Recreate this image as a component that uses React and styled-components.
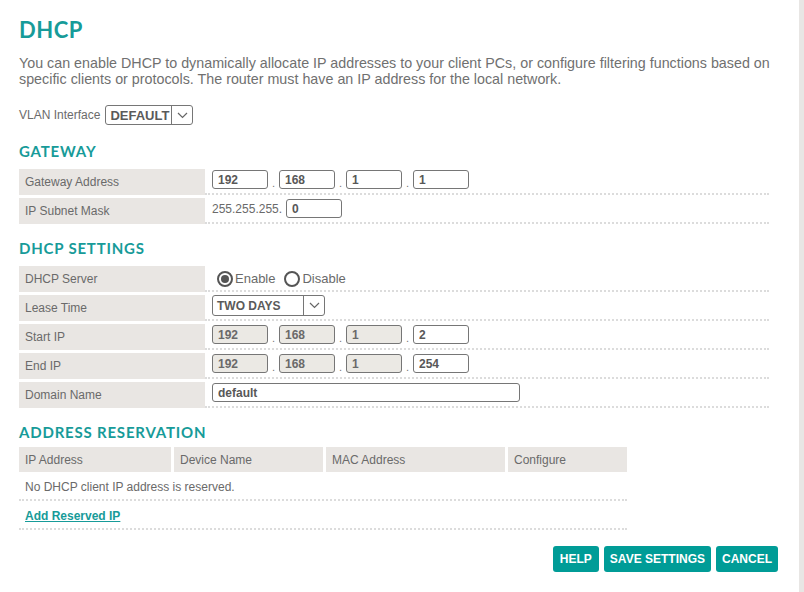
import styled, { createGlobalStyle } from "styled-components";

const GlobalStyle = createGlobalStyle`
	html, body {
		margin: 0;
		padding: 0;
		background: #ffffff;
	}
	body {
		font-family: "Liberation Sans", Arial, sans-serif;
		color: #6b6b6b;
	}
`;

const teal = "#179b99";
const labelBg = "#e9e6e3";

const Page = styled.div`
	box-sizing: border-box;
	width: 804px;
	min-height: 100vh;
	border-right: 5px solid #e8e6e4;
	padding: 17px 0 20px 19px;
`;

const Title = styled.h1`
	margin: 0;
	font-family: Lato, "DejaVu Sans", sans-serif;
	font-weight: 700;
	font-size: 22px;
	line-height: 26px;
	letter-spacing: 0.5px;
	color: ${teal};
`;

const Intro = styled.p`
	margin: 12px 0 0;
	width: 765px;
	font-size: 14.3px;
	line-height: 16px;
	color: #707070;
`;

const VlanRow = styled.div`
	display: flex;
	align-items: center;
	gap: 5px;
	margin-top: 18px;
	font-size: 12px;
`;

const SectionTitle = styled.h2`
	margin: ${(p) => (p.$first ? "17px" : "15px")} 0 ${(p) => p.$after || 9}px;
	font-family: Lato, "DejaVu Sans", sans-serif;
	font-weight: 700;
	font-size: 15px;
	line-height: 18px;
	letter-spacing: 0.8px;
	color: ${teal};
`;

const Table = styled.div`
	display: flex;
	flex-direction: column;
	gap: 3px;
	width: 750px;
`;

const Row = styled.div`
	display: flex;
	height: 26px;
`;

const Label = styled.div`
	box-sizing: border-box;
	width: 186px;
	flex: none;
	background: ${labelBg};
	padding-left: 6px;
	display: flex;
	align-items: center;
	font-size: 12px;
	color: #6a6a6a;
`;

const Value = styled.div`
	box-sizing: border-box;
	flex: 1;
	display: flex;
	align-items: center;
	padding-left: 7px;
	padding-bottom: 3px;
	border-bottom: 2px dotted #dcdcdc;
	font-size: 12px;
	color: #6a6a6a;
`;

const Prefix = styled.span`
	margin-right: 4px;
`;

const Input = styled.input`
	box-sizing: border-box;
	width: ${(p) => p.$w || 56}px;
	height: 19px;
	margin: 0;
	padding: 0 5px;
	border: 1px solid #767676;
	border-radius: 3px;
	background: ${(p) => (p.disabled ? "#ebe9e4" : "#ffffff")};
	font-family: "Liberation Sans", Arial, sans-serif;
	font-weight: 700;
	font-size: 12px;
	color: #585858;
	outline: none;
	&:disabled {
		color: #6a6a6a;
	}
`;

const Dot = styled.span`
	width: 11px;
	text-align: center;
	font-size: 11px;
	color: #777;
	align-self: flex-end;
	padding-bottom: 1px;
`;

const SelectBox = styled.div`
	box-sizing: border-box;
	display: flex;
	width: ${(p) => p.$w}px;
	height: ${(p) => p.$h || 21}px;
	border: 1px solid #767676;
	border-radius: 3px;
	background: #fff;
`;

const SelectText = styled.span`
	flex: 1;
	display: flex;
	align-items: center;
	padding-left: 4px;
	font-weight: 700;
	font-size: ${(p) => p.$size || 12}px;
	color: #5a5a5a;
`;

const SelectArrow = styled.span`
	width: 20px;
	border-left: 1px solid #767676;
	display: flex;
	align-items: center;
	justify-content: center;
`;

const RadioGroup = styled.label`
	display: flex;
	align-items: center;
	margin-left: ${(p) => (p.$first ? 5 : 0)}px;
	margin-right: 9px;
	font-size: 13px;
	color: #6a6a6a;
	padding-top: 4px;
`;

const RadioCircle = styled.span`
	box-sizing: border-box;
	width: 16px;
	height: 16px;
	border: 2px solid #555;
	border-radius: 50%;
	margin-right: 2px;
	display: flex;
	align-items: center;
	justify-content: center;
	&::after {
		content: "";
		width: 8px;
		height: 8px;
		border-radius: 50%;
		background: ${(p) => (p.$on ? "#555" : "transparent")};
	}
`;

const ResTable = styled.div`
	width: 608px;
`;

const HeadRow = styled.div`
	display: grid;
	grid-template-columns: 152px 149px 179px 119px;
	gap: 3px;
`;

const HeadCell = styled.div`
	height: 25px;
	background: ${labelBg};
	padding-left: 6px;
	display: flex;
	align-items: center;
	font-size: 12px;
	color: #6a6a6a;
`;

const PlainRow = styled.div`
	box-sizing: border-box;
	height: 29px;
	padding: 3px 0 0 6px;
	display: flex;
	align-items: center;
	border-bottom: 2px dotted #dcdcdc;
	font-size: 12px;
	color: #6a6a6a;
`;

const Link = styled.a`
	font-weight: 700;
	font-size: 12px;
	color: ${teal};
	text-decoration: underline;
	cursor: pointer;
`;

const ButtonBar = styled.div`
	display: flex;
	justify-content: flex-end;
	gap: 5px;
	width: 759px;
	margin-top: 16px;
`;

const Button = styled.button`
	height: 26px;
	padding: 0 ${(p) => p.$px || 6}px;
	border: none;
	border-radius: 3px;
	background: #009c97;
	color: #fff;
	font-family: "Liberation Sans", Arial, sans-serif;
	font-weight: 700;
	font-size: 12px;
	cursor: pointer;
`;

const Chevron = () => (
	<svg width="11" height="7" viewBox="0 0 11 7">
		<path d="M1 1l4.5 4.5L10 1" fill="none" stroke="#666" strokeWidth="1.2" />
	</svg>
);

function IpFields({ parts, locked = 0 }) {
	return parts.map((v, i) => (
		<span key={i} style={{ display: "contents" }}>
			{i > 0 && <Dot>.</Dot>}
			<Input defaultValue={v} disabled={i < locked} />
		</span>
	));
}

export default function App() {
	return (
		<Page>
			<GlobalStyle />
			<Title>DHCP</Title>
			<Intro>
				You can enable DHCP to dynamically allocate IP addresses to your client PCs, or configure
				filtering functions based on specific clients or protocols. The router must have an IP
				address for the local network.
			</Intro>
			<VlanRow>
				VLAN Interface
				<SelectBox $w={88} $h={20}>
					<SelectText $size={13}>DEFAULT</SelectText>
					<SelectArrow>
						<Chevron />
					</SelectArrow>
				</SelectBox>
			</VlanRow>

			<SectionTitle $first>GATEWAY</SectionTitle>
			<Table>
				<Row>
					<Label>Gateway Address</Label>
					<Value>
						<IpFields parts={["192", "168", "1", "1"]} />
					</Value>
				</Row>
				<Row>
					<Label>IP Subnet Mask</Label>
					<Value>
						<Prefix>255.255.255.</Prefix>
						<Input defaultValue="0" />
					</Value>
				</Row>
			</Table>

			<SectionTitle>DHCP SETTINGS</SectionTitle>
			<Table>
				<Row>
					<Label>DHCP Server</Label>
					<Value>
						<RadioGroup $first>
							<RadioCircle $on />
							Enable
						</RadioGroup>
						<RadioGroup>
							<RadioCircle />
							Disable
						</RadioGroup>
					</Value>
				</Row>
				<Row>
					<Label>Lease Time</Label>
					<Value>
						<SelectBox $w={113}>
							<SelectText>TWO DAYS</SelectText>
							<SelectArrow>
								<Chevron />
							</SelectArrow>
						</SelectBox>
					</Value>
				</Row>
				<Row>
					<Label>Start IP</Label>
					<Value>
						<IpFields parts={["192", "168", "1", "2"]} locked={3} />
					</Value>
				</Row>
				<Row>
					<Label>End IP</Label>
					<Value>
						<IpFields parts={["192", "168", "1", "254"]} locked={3} />
					</Value>
				</Row>
				<Row>
					<Label>Domain Name</Label>
					<Value>
						<Input $w={308} defaultValue="default" />
					</Value>
				</Row>
			</Table>

			<SectionTitle $after={6}>ADDRESS RESERVATION</SectionTitle>
			<ResTable>
				<HeadRow>
					<HeadCell>IP Address</HeadCell>
					<HeadCell>Device Name</HeadCell>
					<HeadCell>MAC Address</HeadCell>
					<HeadCell>Configure</HeadCell>
				</HeadRow>
				<PlainRow>No DHCP client IP address is reserved.</PlainRow>
				<PlainRow>
					<Link>Add Reserved IP</Link>
				</PlainRow>
			</ResTable>

			<ButtonBar>
				<Button $px={7}>HELP</Button>
				<Button>SAVE SETTINGS</Button>
				<Button>CANCEL</Button>
			</ButtonBar>
		</Page>
	);
}
